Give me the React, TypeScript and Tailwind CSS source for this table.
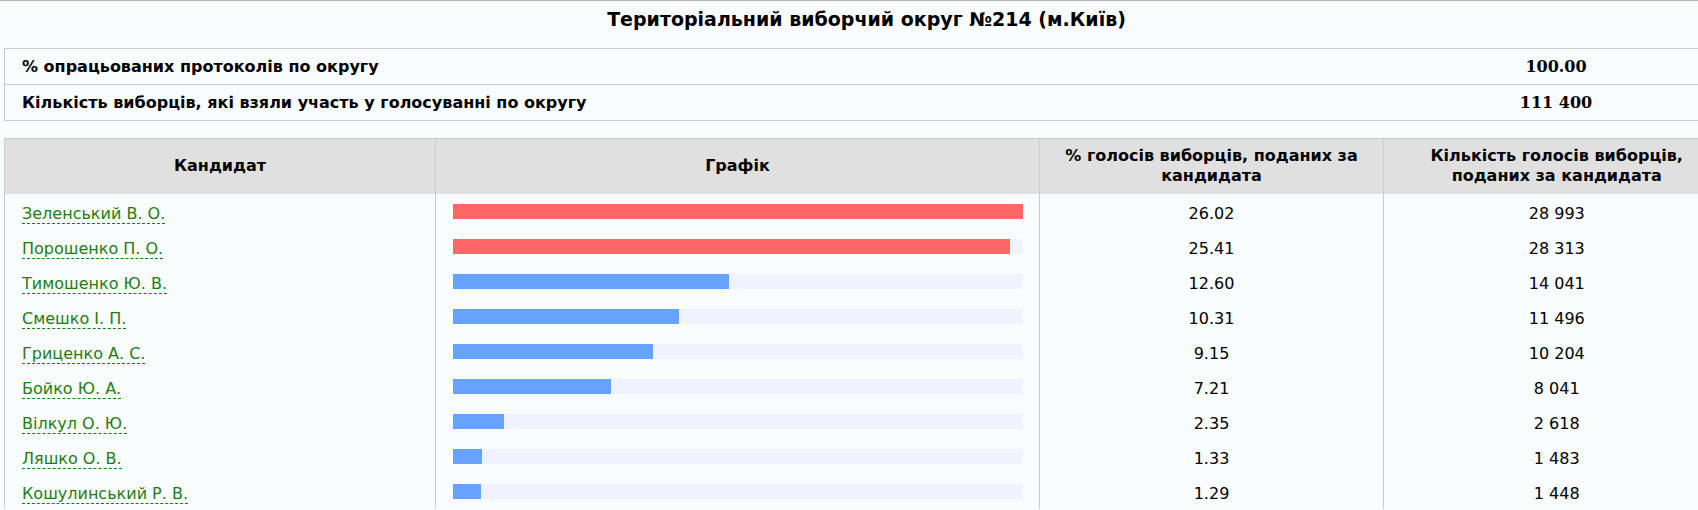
const candidates = [
  { name: 'Зеленський В. О.', pct: 26.02, votes: '28 993' },
  { name: 'Порошенко П. О.', pct: 25.41, votes: '28 313' },
  { name: 'Тимошенко Ю. В.', pct: 12.6, votes: '14 041' },
  { name: 'Смешко І. П.', pct: 10.31, votes: '11 496' },
  { name: 'Гриценко А. С.', pct: 9.15, votes: '10 204' },
  { name: 'Бойко Ю. А.', pct: 7.21, votes: '8 041' },
  { name: 'Вілкул О. Ю.', pct: 2.35, votes: '2 618' },
  { name: 'Ляшко О. В.', pct: 1.33, votes: '1 483' },
  { name: 'Кошулинський Р. В.', pct: 1.29, votes: '1 448' },
]

const maxPct = Math.max(...candidates.map((c) => c.pct))

export default function App() {
  return (
    <div className="h-[510px] w-[1698px] overflow-hidden border-t border-[#b4b4b4] bg-[#f8fcfd] font-['DejaVu_Sans',sans-serif] text-black">
      <div className="w-[1733px]">
        <h1 className="pt-[6px] pb-[17px] text-center text-[19px] font-bold leading-[24px]">
          Територіальний виборчий округ №214 (м.Київ)
        </h1>

        <table className="ml-[4px] w-[1725px] table-fixed border-collapse">
          <colgroup>
            <col />
            <col className="w-[346px]" />
          </colgroup>
          <tbody>
            <tr className="h-[36px] border-y border-[#cccccc]">
              <td className="border-l border-[#cccccc] pl-[17px] text-[16px] font-bold">
                % опрацьованих протоколів по округу
              </td>
              <td className="text-center font-['DejaVu_Serif',serif] text-[16px] font-bold">
                100.00
              </td>
            </tr>
            <tr className="h-[36px] border-y border-[#cccccc]">
              <td className="border-l border-[#cccccc] pl-[17px] text-[16px] font-bold">
                Кількість виборців, які взяли участь у голосуванні по округу
              </td>
              <td className="text-center font-['DejaVu_Serif',serif] text-[16px] font-bold">
                111 400
              </td>
            </tr>
          </tbody>
        </table>

        <table className="mt-[17px] ml-[4px] w-[1725px] table-fixed border-collapse">
          <colgroup>
            <col className="w-[431px]" />
            <col className="w-[604px]" />
            <col className="w-[344px]" />
            <col className="w-[346px]" />
          </colgroup>
          <thead>
            <tr className="h-[55px] border-t border-[#cccccc] bg-[#e0e0e0] text-[16px] font-bold leading-[20px]">
              <th className="border-x border-[#cccccc] px-[8px] text-center">Кандидат</th>
              <th className="border-x border-[#cccccc] px-[8px] text-center">Графік</th>
              <th className="border-x border-[#cccccc] px-[16px] text-center">
                % голосів виборців, поданих за кандидата
              </th>
              <th className="border-l border-[#cccccc] px-[28px] text-center">
                Кількість голосів виборців, поданих за кандидата
              </th>
            </tr>
          </thead>
          <tbody>
            {candidates.map((c, i) => (
              <tr key={c.name} className="h-[35px] text-[16px]">
                <td className="border-x border-[#cccccc] pt-[5px] pl-[17px]">
                  <a
                    href="#"
                    className="border-b border-dashed border-[#118011] text-[#1f7d12] no-underline"
                  >
                    {c.name}
                  </a>
                </td>
                <td className="border-x border-[#cccccc] pr-[16px] pl-[17px]">
                  <div className="h-[15px] w-full bg-[#eef3ff]">
                    <div
                      className={i < 2 ? 'h-full bg-[#ff6666]' : 'h-full bg-[#66a3ff]'}
                      style={{ width: `${(c.pct / maxPct) * 100}%` }}
                    />
                  </div>
                </td>
                <td className="border-x border-[#cccccc] pt-[5px] text-center">
                  {c.pct.toFixed(2)}
                </td>
                <td className="border-l border-[#cccccc] pt-[5px] text-center">{c.votes}</td>
              </tr>
            ))}
          </tbody>
        </table>
      </div>
    </div>
  )
}
